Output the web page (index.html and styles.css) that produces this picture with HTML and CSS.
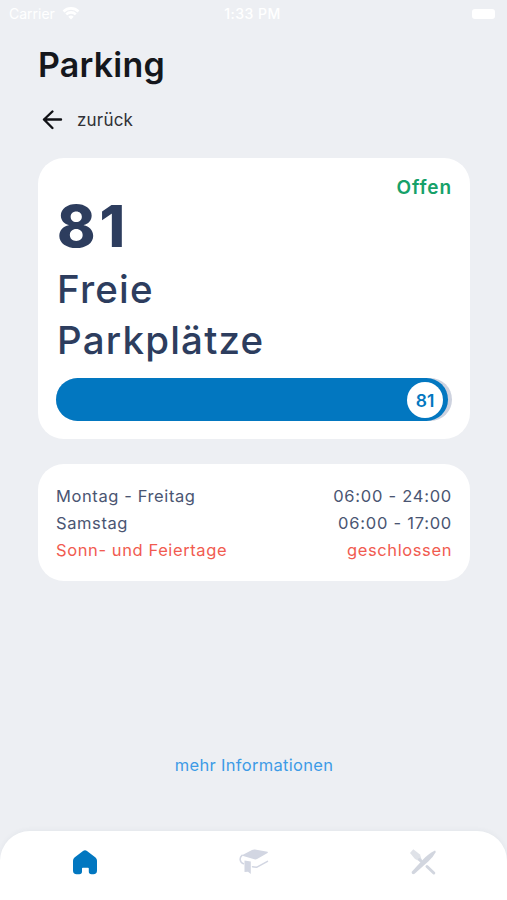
FILE: index.html
```html
<!DOCTYPE html>
<html lang="de">
  <head>
    <meta charset="UTF-8" />
    <meta name="viewport" content="width=device-width, initial-scale=1.0" />
    <title>Parking</title>
    <link rel="stylesheet" href="styles.css">
  </head>
  <body>
    <div class="statusbar">
      <div class="carrier">
        <span>Carrier</span>
        <svg width="18" height="13" viewBox="0 0 18 13">
          <path d="M1.5 4.5a10.6 10.6 0 0 1 15 0M4.2 7.4a6.8 6.8 0 0 1 9.6 0" fill="none" stroke="#fff" stroke-width="2.6" />
          <path d="M9 12.5 6.3 9.8a3.8 3.8 0 0 1 5.4 0z" fill="#fff" />
        </svg>
      </div>
      <div class="time">1:33 PM</div>
      <div class="battery"><span></span></div>
    </div>

    <main class="content">
      <h1 class="title">Parking</h1>
      <a class="back">
        <svg width="22" height="20" viewBox="0 0 22 20">
          <path d="M19 9.500H2M10.400 1.500 2 9.500l8.400 8.500" fill="none" stroke="#111216" stroke-width="2.4" stroke-linecap="round" stroke-linejoin="round" />
        </svg>
        <span>zurück</span>
      </a>

      <section class="card parking">
        <div class="status">Offen</div>
        <div class="count">81</div>
        <div class="label">Freie<br>Parkplätze</div>
        <div class="bar">
          <div class="fill"><span class="knob">81</span></div>
        </div>
      </section>

      <section class="card hours">
        <div class="row"><span>Montag - Freitag</span><span class="range">06:00 - 24:00</span></div>
        <div class="row"><span>Samstag</span><span class="range">06:00 - 17:00</span></div>
        <div class="row closed"><span>Sonn- und Feiertage</span><span>geschlossen</span></div>
      </section>

      <a class="more">mehr Informationen</a>
    </main>

    <nav class="tabbar">
      <a class="tab">
        <svg width="30" height="30" viewBox="0 0 30 30">
          <path d="M13 4Q15 2.400 17 4L25.500 10.600Q27 11.800 27 13.700V23.500Q27 27.300 23.300 27.300H21.500Q18.800 27.300 18.800 24.600V21.500Q18.800 20.800 18 20.800H12.800Q12 20.800 12 21.500V24.600Q12 27.300 9.300 27.300H6.700Q3 27.300 3 23.500V13.700Q3 11.800 4.500 10.600Z" fill="#0277c0" />
        </svg>
      </a>
      <a class="tab">
        <svg width="30" height="30" viewBox="0 0 30 30">
          <path d="M2.500 8.500 13 3Q14.500 2.300 16 2.600L28.500 4.800Q29.300 5.300 28.500 6L18.500 11.800Q17 12.600 15.300 12.300Z" fill="#d2d6e2" />
          <path d="M3 8.300Q.800 10 1.200 12.800T4.500 16.800M28.500 14.300L17.500 20.300 13.500 19.800" fill="none" stroke="#d2d6e2" stroke-width="1.500" stroke-linecap="round" stroke-linejoin="round" />
          <path d="M5.500 13.500 11.800 14.500V27L9 24.800 5.500 25Z" fill="#d2d6e2" />
        </svg>
      </a>
      <a class="tab">
        <svg width="30" height="30" viewBox="0 0 30 30">
          <path d="M5.300 2.200 12 7.500 13.800 13 12 14.500 7 12 2 6Z" fill="#dfe2e8" />
          <path d="M11.500 12.500 13 14M19 19.500l6.800 6.500" stroke="#d2d6df" stroke-width="3" stroke-linecap="round" />
          <path d="M4 24.500 14.500 13Q20.500 6.500 27 3.500 28 4.200 27.500 5.500 25.500 9.500 20.500 14.200L6.600 26.800Q4.900 27.800 4 26.600 3.300 25.600 4 24.500Z" fill="#d2d6df" />
        </svg>
      </a>
    </nav>
  </body>
</html>
```
FILE: styles.css
```css
* {
  box-sizing: border-box;
}
body,
html {
  height: 100%;
  margin: 0;
  overflow: hidden;
}
body {
  display: flex;
  flex-direction: column;
  background: #edeff3;
  color: #2d3d5e;
  font-family: Inter, "Liberation Sans", sans-serif;
}
.statusbar {
  display: grid;
  grid-template-columns: 1fr auto 1fr;
  align-items: center;
  height: 27px;
  padding: 0 11px 0 9px;
  color: white;
  font-size: 14px;
}
.carrier {
  display: flex;
  align-items: center;
  gap: 7px;
}
.time {
  font-weight: 500;
  letter-spacing: 0.5px;
}
.battery {
  justify-self: end;
  width: 25px;
  height: 12px;
  padding: 1px;
  border-radius: 4px;
}
.battery span {
  display: block;
  height: 10px;
  border-radius: 3px;
  background: white;
}
.content {
  flex: 1;
  display: flex;
  flex-direction: column;
  padding: 0 37px 0 38px;
}
.title {
  margin: 17px 0 0;
  color: #15171c;
  font-size: 34px;
  line-height: 42px;
  font-weight: 600;
  letter-spacing: 0.2px;
}
.back {
  display: flex;
  align-items: center;
  gap: 13px;
  height: 24px;
  margin-top: 22px;
  padding-left: 4px;
  color: #303136;
  font-size: 17px;
  letter-spacing: 0.2px;
}
.card {
  background: white;
  border-radius: 26px;
}
.parking {
  height: 281px;
  margin-top: 26px;
  padding: 17px 18px 0;
}
.status {
  color: #16a169;
  font-size: 19px;
  line-height: 25px;
  font-weight: 600;
  letter-spacing: 0.9px;
  text-align: right;
}
.count {
  font-size: 58px;
  line-height: 60px;
  margin-top: -4px;
  padding-left: 1px;
  font-weight: 800;
  letter-spacing: 4px;
}
.label {
  margin-top: 8px;
  padding-left: 1px;
  font-size: 38.5px;
  line-height: 51px;
  font-weight: 500;
  letter-spacing: 1.2px;
}
.bar {
  height: 43px;
  margin-top: 12px;
  border-radius: 22px;
  background: #cdd2df;
}
.fill {
  display: flex;
  align-items: center;
  justify-content: flex-end;
  width: 392px;
  height: 43px;
  padding-right: 5px;
  border-radius: 22px;
  background: #0277c0;
}
.knob {
  width: 36px;
  height: 36px;
  border-radius: 50%;
  background: white;
  color: #0277c0;
  font-size: 17.5px;
  line-height: 37px;
  font-weight: 600;
  text-align: center;
}
.hours {
  height: 117px;
  margin-top: 25px;
  padding: 19px 18px 0;
}
.row {
  display: flex;
  justify-content: space-between;
  color: #4a5572;
  font-size: 16.5px;
  line-height: 27px;
  letter-spacing: 0.6px;
}
.range {
  letter-spacing: 0.75px;
}
.closed {
  color: #f15b50;
}
.more {
  margin-top: 172px;
  color: #3d9be6;
  font-size: 16.5px;
  line-height: 24px;
  letter-spacing: 0.3px;
  text-align: center;
}
.tabbar {
  display: flex;
  height: 69px;
  padding-top: 16px;
  border-radius: 30px 30px 0 0;
  background: white;
  box-shadow: 0 -1px 5px rgba(60, 70, 100, 0.05);
}
.tab {
  flex: 1;
  display: flex;
  justify-content: center;
}
```
